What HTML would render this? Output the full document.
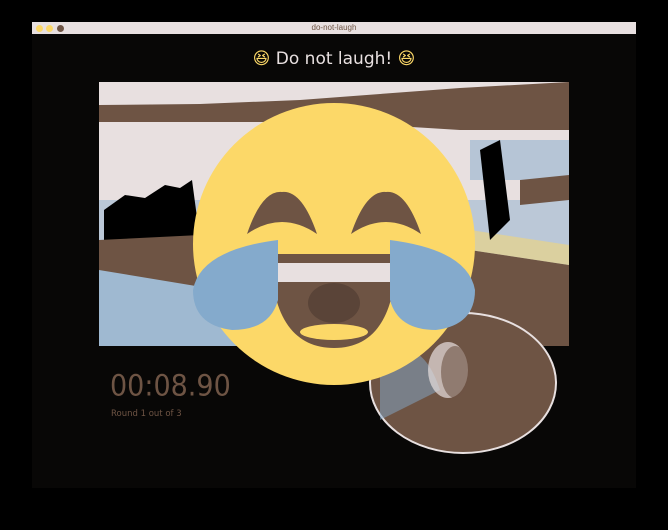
<!DOCTYPE html>
<html><head><meta charset="utf-8"><style>
*{margin:0;padding:0}
html,body{width:668px;height:530px;background:#000;overflow:hidden;font-family:"Liberation Sans",sans-serif}
.win{position:absolute;left:32px;top:22px;width:604px;height:466px;background:#080706}
.tb{position:absolute;left:0;top:0;width:604px;height:12px;background:#e8e0e0;font-size:8px;color:#6e5444;text-align:center;line-height:12px}
.dot{position:absolute;top:3px;width:7px;height:7px;border-radius:50%}
.title{position:absolute;left:0;width:668px;top:49px;text-align:center;color:#e8e0e0;font-size:17px;font-family:"DejaVu Sans",sans-serif}
.timer{position:absolute;left:110px;top:369px;color:#6e5444;font-size:27px;font-family:"DejaVu Sans",sans-serif;transform:scaleY(1.1);transform-origin:0 0}
.round{position:absolute;left:111px;top:409px;color:#6e5444;font-size:8.5px;font-family:"DejaVu Sans",sans-serif}
</style></head><body>
<div class="win"><div class="tb">do-not-laugh
<div class="dot" style="left:4px;background:#fcd868"></div><div class="dot" style="left:14px;background:#fcd868"></div><div class="dot" style="left:25px;background:#6e5444"></div></div></div>
<div class="title"><span style="color:#fcd868">😆</span> Do not laugh! <span style="color:#fcd868">😆</span></div>
<svg style="position:absolute;left:0;top:0" width="668" height="530">
<rect x="99" y="82" width="470" height="264" fill="#e8e0e0"/>
<path d="M99 105 L200 104 L300 100 L380 94 L460 88 L569 82 L569 130 L460 130 L380 125 L300 122 L99 122 Z" fill="#6e5444"/>
<rect x="99" y="200" width="470" height="146" fill="#84aacc" opacity=".45"/>
<path d="M99 250 L200 240 L300 260 L300 346 L99 346 Z" fill="#84aacc" opacity=".5"/>
<path d="M470 140 L569 140 L569 180 L470 180 Z" fill="#84aacc" opacity=".5"/>
<path d="M470 250 L569 265 L569 346 L470 346 Z" fill="#6e5444"/>
<path d="M470 230 L569 245 L569 265 L470 250 Z" fill="#fcd868" opacity=".5"/>
<path d="M480 150 L500 140 L510 220 L490 240 Z" fill="#000"/>
<path d="M520 180 L569 175 L569 200 L520 205 Z" fill="#6e5444"/>
<path d="M104 210 L125 195 L145 198 L165 185 L180 188 L192 180 L200 240 L104 240 Z" fill="#000"/>
<path d="M99 240 L200 235 L220 290 L99 270 Z" fill="#6e5444"/>
<ellipse cx="463" cy="383" rx="93" ry="70" fill="#6e5444" stroke="#e8e0e0" stroke-width="2"/>
<path d="M380 360 Q420 330 440 390 L380 420 Z" fill="#84aacc" opacity=".5"/>
<ellipse cx="448" cy="370" rx="20" ry="28" fill="#e8e0e0" opacity=".7"/>
<ellipse cx="455" cy="372" rx="14" ry="26" fill="#6e5444" opacity=".6"/>
<circle cx="334" cy="244" r="141" fill="#fcd868"/>
<path d="M247 234 Q262 190 282 192 Q302 190 317 234 Q282 210 247 234 Z" fill="#6e5444"/>
<path d="M351 234 Q366 190 386 192 Q406 190 421 234 Q386 210 351 234 Z" fill="#6e5444"/>
<path d="M271 254 L396 254 C396 320 372 348 334 348 C296 348 271 320 271 254 Z" fill="#6e5444"/>
<rect x="271" y="263" width="125" height="19" fill="#e8e0e0"/>
<ellipse cx="334" cy="303" rx="26" ry="20" fill="#5a4438"/>
<ellipse cx="334" cy="332" rx="34" ry="8" fill="#fcd868"/>
<path d="M278 240 L278 300 Q270 330 232 330 Q193 325 193 290 Q200 250 278 240 Z" fill="#84aacc"/>
<path d="M390 240 L390 300 Q398 330 436 330 Q475 325 475 290 Q468 250 390 240 Z" fill="#84aacc"/>
</svg>
<div class="timer">00:08.90</div>
<div class="round">Round 1 out of 3</div>
</body></html>
